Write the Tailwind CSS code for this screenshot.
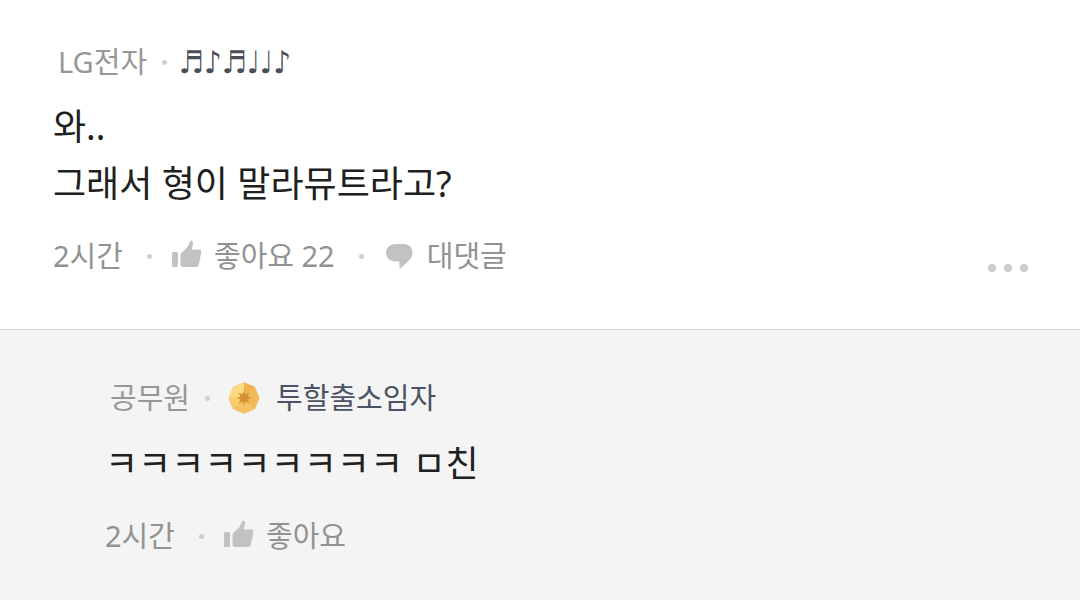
<!DOCTYPE html>
<html lang="ko">
<head>
    <meta charset="utf-8">
    <meta name="viewport" content="width=device-width, initial-scale=1">
    <title>댓글</title>
    <script src="https://cdn.jsdelivr.net/npm/@tailwindcss/browser@4"></script>
</head>
<body class="min-h-screen bg-[#f4f4f4] font-['Noto_Sans','Noto_Sans_CJK_KR',sans-serif] text-[29px] leading-10 text-[#929292]">
<svg class="hidden">
    <symbol id="thumb" viewBox="0 0 30 28">
        <rect x="0" y="12" width="6" height="15" rx="1.5"/>
        <path d="M8.5 15 Q8.5 13.8 9.3 13 L15.5 7 L18.2 1.3 Q18.8 .2 19.9 .8 Q21.3 1.6 21 3.5 L19.8 9.5 H27.5 Q29.7 9.5 29.3 12 L26.8 25 Q26.4 27 24.5 27 H10.5 Q8.5 27 8.5 25 Z"/>
    </symbol>
</svg>

<article class="bg-white border-b border-[#d4d4d4] pt-[42px] pb-[53px] pl-[53px] pr-[52px]">
    <header class="flex items-center pl-[5px]">
        <a href="#" class="text-[#97979a]">LG전자</a>
        <span class="w-[5px] h-[5px] rounded-full bg-[#cfcfcf] ml-[15px] mr-3"></span>
        <a href="#" class="font-['DejaVu_Sans_Condensed','DejaVu_Sans',sans-serif] text-[31px] text-[#4a4f57]">♬♪♬♩♩♪</a>
    </header>
    <p class="mt-4 text-[36px] leading-[57px] text-[#202020]">와..<br>그래서 형이 말라뮤트라고?</p>
    <footer class="flex items-center mt-6">
        <time>2시간</time>
        <span class="w-[5px] h-[5px] rounded-full bg-[#cfcfcf] ml-6 mr-5"></span>
        <button type="button" class="flex items-center gap-3">
            <svg class="w-[30px] h-7 mb-1 fill-[#c2c2c2]" aria-hidden="true"><use href="#thumb"/></svg>
            좋아요 22
        </button>
        <span class="w-[5px] h-[5px] rounded-full bg-[#cfcfcf] ml-6 mr-[22px]"></span>
        <button type="button" class="flex items-center gap-3.5">
            <svg class="w-[27px] h-[25px] fill-[#c2c2c2]" viewBox="0 0 27 25" aria-hidden="true">
                <path d="M9.5 0 H17.5 C23 0 26.5 3.5 26.5 8.5 C26.5 12.5 24.5 15 22 17.5 L14.5 24.2 Q13.5 25 13.5 23.7 V17.5 H9.5 C4 17.5 0 14 0 8.8 C0 3.5 4 0 9.5 0 Z"/>
            </svg>
            대댓글
        </button>
        <button type="button" aria-label="더보기" class="flex gap-2 ml-auto mt-6">
            <span class="w-2 h-2 rounded-full bg-[#cbcbcb]"></span>
            <span class="w-2 h-2 rounded-full bg-[#cbcbcb]"></span>
            <span class="w-2 h-2 rounded-full bg-[#cbcbcb]"></span>
        </button>
    </footer>
</article>

<article class="pt-12 pl-[105px] pr-[52px]">
    <header class="flex items-center pl-[5px]">
        <a href="#" class="text-[#97979a]">공무원</a>
        <span class="w-[5px] h-[5px] rounded-full bg-[#cfcfcf] ml-[15px] mr-[18px]"></span>
        <svg class="w-8 h-8 mr-4" viewBox="0 0 32 32" aria-hidden="true">
            <path fill="#f1bb5a" d="M16 .5 L27 5 L31.5 16 L27 27 L16 31.5 L5 27 L.5 16 L5 5 Z"/>
            <path fill="#fad980" d="M16 .5 L5 5 L.5 16 L16 16 Z"/>
            <path fill="#f7cd70" d="M.5 16 L5 27 L16 16 Z"/>
            <path fill="#eeb355" d="M16 .5 L27 5 L16 16 Z"/>
            <path fill="#f4c366" d="M5 27 L16 31.5 L27 27 L16 16 Z"/>
            <path fill="#d3922f" d="M16 8.5 L17.5 12.5 L21.5 10.5 L19.5 14.5 L23.5 16 L19.5 17.5 L21.5 21.5 L17.5 19.5 L16 23.5 L14.5 19.5 L10.5 21.5 L12.5 17.5 L8.5 16 L12.5 14.5 L10.5 10.5 L14.5 12.5 Z"/>
        </svg>
        <a href="#" class="text-[#4b5263]">투할출소임자</a>
    </header>
    <p class="mt-[17px] text-[36px] leading-[57px] text-[#202020]">ㅋㅋㅋㅋㅋㅋㅋㅋㅋ ㅁ친</p>
    <footer class="flex items-center mt-6 pb-10">
        <time>2시간</time>
        <span class="w-[5px] h-[5px] rounded-full bg-[#cfcfcf] ml-6 mr-5"></span>
        <button type="button" class="flex items-center gap-3">
            <svg class="w-[30px] h-7 mb-1 fill-[#c2c2c2]" aria-hidden="true"><use href="#thumb"/></svg>
            좋아요
        </button>
    </footer>
</article>
</body>
</html>
